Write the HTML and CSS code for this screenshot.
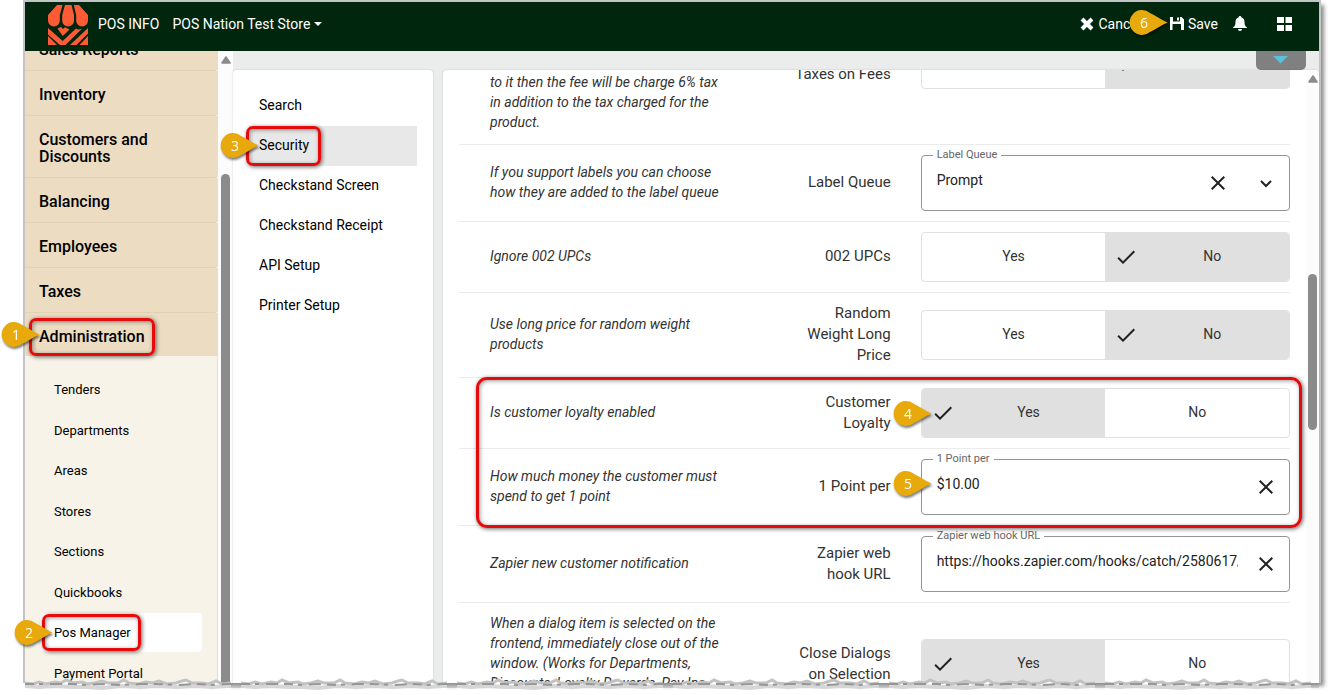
FILE: index.html
```html
<!DOCTYPE html>
<html lang="en">
<head>
<meta charset="utf-8">
<title>POS Manager</title>
<link rel="stylesheet" href="styles.css">
</head>
<body>
<svg class="defs" aria-hidden="true">
  <symbol id="check" viewBox="0 0 24 24"><path d="M9 16.17 4.83 12l-1.42 1.41L9 19 21 7l-1.41-1.41z"/></symbol>
  <symbol id="close" viewBox="0 0 24 24"><path d="M19 6.41 17.59 5 12 10.59 6.41 5 5 6.41 10.59 12 5 17.59 6.41 19 12 13.41 17.59 19 19 17.59 13.41 12z"/></symbol>
  <symbol id="up" viewBox="0 0 10 8"><path d="M5 1 9 7H1z" stroke="currentColor" stroke-width="1.6" stroke-linejoin="round"/></symbol>
  <symbol id="pin" viewBox="0 0 40 26"><path d="M39.5 12.5C33 9.500 28 6 22 3A12.400 12.400 0 1 0 22 22C28 19 33 15.500 39.500 12.500Z"/></symbol>
</svg>
<div class="frame">
  <header class="topbar">
    <svg class="logo" viewBox="0 0 40 40" aria-hidden="true">
      <g fill="#ff5a36">
        <path d="M9 0h5.500L11.800 10v5.500a5.900 5.900 0 0 1-11.800 0V10Z"/>
        <path d="M17 0h6.500L26 10v5.500a5.900 5.900 0 0 1-11.800 0V10Z"/>
        <path d="M25.800 0H31l9 10v5.500a5.900 5.900 0 0 1-11.800 0V10Z"/>
        <path d="M0 31v9h9zM40 31v9h-8.500z"/>
        <path d="M0 23 14.700 36 28 23.500c2 1.500 4 1.200 6 .200L17.500 40h-5.600L0 29.500z"/>
        <path d="M40 23v5.500L28.500 40H22z"/>
        <path d="M9.500 23.500 13 22l2 2 2-1.800 4.500 2.300-6.700 6.500z"/>
      </g>
    </svg>
    <a class="brand" href="#">POS INFO</a>
    <button class="store" type="button">POS Nation Test Store<span class="caret"></span></button>
    <div class="actions">
      <button type="button" class="cancel"><svg width="14" height="14" viewBox="0 0 14 14" aria-hidden="true"><path d="m2 2 10 10M12 2 2 12" stroke="#fff" stroke-width="4"/></svg>Cancel</button>
      <button type="button" class="save"><svg width="15" height="15" viewBox="0 0 15 15" aria-hidden="true"><path fill="#fff" fill-rule="evenodd" d="M1 1h11.500L15 3.500V14H1zM4 1v4.500h7V1zM3.500 8v6h8.500V8z"/><path fill="#fff" d="M8 1.500h2v3H8z"/></svg>Save</button>
      <button type="button" class="bell" aria-label="Notifications"><svg width="14" height="15" viewBox="0 0 14 15" aria-hidden="true"><path fill="#fff" d="M7 0c.8 0 1.200.5 1.200 1.200C10.500 1.800 11.500 3.500 11.500 6c0 3 .7 4.200 2.500 5.500V12H0v-.5C1.800 10.200 2.500 9 2.500 6c0-2.500 1-4.200 3.300-4.800C5.800.5 6.200 0 7 0ZM5 13h4a2 2 0 0 1-4 0Z"/></svg></button>
      <button type="button" class="apps" aria-label="Apps"><svg width="15" height="14" viewBox="0 0 15 14" aria-hidden="true"><path fill="#fff" d="M0 0h7v6H0zM8.500 0H15v6H8.500zM0 8h7v6H0zM8.500 8H15v6H8.500z"/></svg></button>
    </div>
  </header>
  <div class="body">
    <aside class="sidebar">
      <nav class="nav">
        <a class="nav-item" href="#">Sales Reports</a>
        <a class="nav-item" href="#">Inventory</a>
        <a class="nav-item" href="#">Customers and Discounts</a>
        <a class="nav-item" href="#">Balancing</a>
        <a class="nav-item" href="#">Employees</a>
        <a class="nav-item" href="#">Taxes</a>
        <a class="nav-item open" href="#">Administration</a>
        <div class="subnav">
          <a href="#">Tenders</a>
          <a href="#">Departments</a>
          <a href="#">Areas</a>
          <a href="#">Stores</a>
          <a href="#">Sections</a>
          <a href="#">Quickbooks</a>
          <a class="current" href="#">Pos Manager</a>
          <a href="#">Payment Portal</a>
        </div>
      </nav>
    </aside>
    <div class="track side-track"><svg class="arrow"><use href="#up"/></svg><div class="thumb"></div></div>
    <main class="main">
      <div class="strip"><button type="button" class="drop-tab" aria-label="Expand"><svg width="16" height="8" viewBox="0 0 16 8" aria-hidden="true"><path fill="#5bc0de" d="M0 0h15L7.500 7.500z"/></svg></button></div>
      <div class="cards">
        <nav class="card sections">
          <a href="#">Search</a>
          <a class="current" href="#">Security</a>
          <a href="#">Checkstand Screen</a>
          <a href="#">Checkstand Receipt</a>
          <a href="#">API Setup</a>
          <a href="#">Printer Setup</a>
        </nav>
        <div class="card settings">
          <form class="rows">
            <div class="row row-tall">
              <p class="desc">product with a deposit fee assigned<br>to it then the fee will be charge 6% tax in addition to the tax charged for the product.</p>
              <span class="name">Calculate Taxes on Fees</span>
              <div class="toggle" role="radiogroup" aria-label="Taxes on Fees">
                <label><input type="radio" name="fees"><svg><use href="#check"/></svg><span>Yes</span></label>
                <label><input type="radio" name="fees" checked><svg><use href="#check"/></svg><span>No</span></label>
              </div>
            </div>
            <div class="row">
              <p class="desc">If you support labels you can choose how they are added to the label queue</p>
              <span class="name">Label Queue</span>
              <div class="field">
                <label for="queue">Label Queue</label>
                <select id="queue"><option>Prompt</option></select>
                <button type="button" aria-label="Clear"><svg><use href="#close"/></svg></button>
                <span class="chevron"><svg viewBox="0 0 24 24" aria-hidden="true"><path d="m7 10 5 5 5-5" fill="none" stroke="#222" stroke-width="2"/></svg></span>
              </div>
            </div>
            <div class="row">
              <p class="desc">Ignore 002 UPCs</p>
              <span class="name">002 UPCs</span>
              <div class="toggle" role="radiogroup" aria-label="002 UPCs">
                <label><input type="radio" name="upc"><svg><use href="#check"/></svg><span>Yes</span></label>
                <label><input type="radio" name="upc" checked><svg><use href="#check"/></svg><span>No</span></label>
              </div>
            </div>
            <div class="row">
              <p class="desc">Use long price for random weight products</p>
              <span class="name">Random Weight Long Price</span>
              <div class="toggle" role="radiogroup" aria-label="Random Weight Long Price">
                <label><input type="radio" name="rw"><svg><use href="#check"/></svg><span>Yes</span></label>
                <label><input type="radio" name="rw" checked><svg><use href="#check"/></svg><span>No</span></label>
              </div>
            </div>
            <div class="row">
              <p class="desc">Is customer loyalty enabled</p>
              <span class="name">Customer Loyalty</span>
              <div class="toggle" role="radiogroup" aria-label="Customer Loyalty">
                <label><input type="radio" name="loyalty" checked><svg><use href="#check"/></svg><span>Yes</span></label>
                <label><input type="radio" name="loyalty"><svg><use href="#check"/></svg><span>No</span></label>
              </div>
            </div>
            <div class="row">
              <p class="desc">How much money the customer must spend to get 1 point</p>
              <span class="name">1 Point per</span>
              <div class="field">
                <label for="point">1 Point per</label>
                <input id="point" type="text" value="$10.00">
                <button type="button" aria-label="Clear"><svg><use href="#close"/></svg></button>
              </div>
            </div>
            <div class="row">
              <p class="desc">Zapier new customer notification</p>
              <span class="name">Zapier web hook URL</span>
              <div class="field">
                <label for="hook">Zapier web hook URL</label>
                <input id="hook" type="text" value="https://hooks.zapier.com/hooks/catch/2580617/">
                <button type="button" aria-label="Clear"><svg><use href="#close"/></svg></button>
              </div>
            </div>
            <div class="row">
              <p class="desc">When a dialog item is selected on the frontend, immediately close out of the window. (Works for Departments, Discounts, Loyalty Rewards, Pay Ins, Pay Outs)</p>
              <span class="name">Close Dialogs on Selection</span>
              <div class="toggle" role="radiogroup" aria-label="Close Dialogs on Selection">
                <label><input type="radio" name="dialogs" checked><svg><use href="#check"/></svg><span>Yes</span></label>
                <label><input type="radio" name="dialogs"><svg><use href="#check"/></svg><span>No</span></label>
              </div>
            </div>
          </form>
          <div class="track main-track"><svg class="arrow"><use href="#up"/></svg><div class="thumb"></div></div>
        </div>
      </div>
    </main>
  </div>
  <svg class="torn" aria-hidden="true">
    <defs>
      <pattern id="tear" width="216" height="14" patternUnits="userSpaceOnUse">
        <path fill="#fff" d="M0 5l8 1 6-2 7 2 9-2 6 1 5-3 7 3 9-1 5 2 8-1 7-2 6 2 10 0 6-3 5 3 9 1 8-2 7 1 6-2 8 3 9-1 6-2 4-1 6 3 10 0 7 1 7-3 6 3 9 0V14H0z"/>
        <path fill="none" stroke="#999" stroke-opacity=".4" stroke-width="4" d="M0 8l14 1 16-1 18 1 14 0 15 1 19-2 20 1 15-1 21 1 19-1 16 1 15-1 14 0"/>
        <path fill="none" stroke="#c2c2c2" stroke-width="3" d="M0 5l8 1 6-2 7 2 9-2 6 1 5-3 7 3 9-1 5 2 8-1 7-2 6 2 10 0 6-3 5 3 9 1 8-2 7 1 6-2 8 3 9-1 6-2 4-1 6 3 10 0 7 1 7-3 6 3 9-1"/>
        <path fill="none" stroke="#969696" stroke-width="2" stroke-dasharray="9 5 4 7 12 6" d="M0 6l14 0 16 0 18 0 14 1 15-1 19 1 20-1 15 0 21 1 19-1 16 1 15-1 14 0"/>
      </pattern>
    </defs>
    <rect width="100%" height="14" fill="url(#tear)"/>
  </svg>
  <div class="mark m1"></div>
  <div class="mark m2"></div>
  <div class="mark m3"></div>
  <div class="mark m4"></div>
  <div class="pin p1"><svg><use href="#pin"/></svg><b>1</b></div>
  <div class="pin p2"><svg><use href="#pin"/></svg><b>2</b></div>
  <div class="pin p3"><svg><use href="#pin"/></svg><b>3</b></div>
  <div class="pin p4"><svg><use href="#pin"/></svg><b>4</b></div>
  <div class="pin p5"><svg><use href="#pin"/></svg><b>5</b></div>
  <div class="pin p6"><svg><use href="#pin"/></svg><b>6</b></div>
</div>
</body>
</html>
```
FILE: styles.css
```css
* { box-sizing: border-box; }
body {
  margin: 0;
  height: 100vh;
  padding: 0 10px 12px 23px;
  display: flex;
  background: #fff;
  font-family: Roboto, "Liberation Sans", sans-serif;
  font-size: 14px;
  color: #000;
  overflow: hidden;
}
.defs { position: absolute; width: 0; height: 0; }
a { color: inherit; text-decoration: none; }
button { border: 0; padding: 0; background: none; font: inherit; color: inherit; }

.frame {
  position: relative;
  flex: 1;
  min-width: 0;
  display: flex;
  flex-direction: column;
  border: 2px solid #c4c3c6;
  border-bottom: 0;
  box-shadow: 4px 4px 4px -1px rgba(0, 0, 0, .45);
}
.topbar {
  flex: none;
  height: 49px;
  display: flex;
  align-items: center;
  padding: 0 27px 3px 23px;
  background: #00260e;
  color: #fff;
}
.logo { width: 40px; height: 40px; margin-right: 10px; }
.brand { margin-right: 13px; padding-bottom: 2px; }
.store { display: flex; align-items: center; gap: 4px; padding-bottom: 2px; }
.caret { border: 4px solid transparent; border-top-color: #fff; border-bottom: 0; }
.actions { margin-left: auto; padding-bottom: 3px; display: flex; align-items: center; }
.actions button { display: flex; align-items: center; gap: 4px; }
.cancel { margin-right: 28px; }
.save { margin-right: 15px; }
.bell { margin-right: 30px; }

.body { flex: 1; min-height: 0; display: flex; }
.sidebar { flex: none; width: 193px; overflow: hidden; background: #f7f3e8; }
.nav { margin-top: -25px; }
.nav-item {
  display: block;
  padding: 15px 56px 12px 14px;
  border-bottom: 1px solid #e0d1b7;
  border-bottom-right-radius: 4px;
  background: #ebdcc2;
  font-size: 16px;
  line-height: 17px;
  font-weight: 500;
}
.nav-item.open { border: 0; border-radius: 0; padding-bottom: 11px; }
.subnav { padding: 14px 15px 0; border-right: 1px solid #e6dcc8; }
.subnav a {
  display: block;
  margin-bottom: 1px;
  padding-left: 14px;
  border-radius: 4px;
  font-size: 13px;
  line-height: 39px;
}
.subnav a:nth-child(odd) { margin-bottom: 2px; }
.subnav .current { background: #fff; }

.track { flex: none; display: flex; flex-direction: column; align-items: center; background: #fcfcfc; }
.arrow { flex: none; width: 10px; height: 8px; margin-top: 5px; color: #8b8b8b; fill: #8b8b8b; }
.thumb { width: 9px; border-radius: 5px; background: #8b8b8b; }
.side-track { width: 15px; }
.side-track .thumb { flex: 1; margin-top: 110px; border-radius: 5px 5px 0 0; }
.main-track { width: 13px; }
.main-track .thumb { height: 25.5%; margin-top: 191px; }

.main { flex: 1; min-width: 0; display: flex; flex-direction: column; background: #ebedec; }
.strip { flex: none; height: 19px; padding-right: 13px; display: flex; justify-content: flex-end; }
.drop-tab { width: 50px; padding-bottom: 2px; display: flex; align-items: center; justify-content: center; background: #808080; border-radius: 0 0 5px 5px; }
.cards { flex: 1; min-height: 0; display: flex; gap: 10px; }
.card { background: #fff; border-radius: 4px 4px 0 0; box-shadow: 0 0 2px rgba(0, 0, 0, .2); overflow: hidden; }
.sections { flex: none; width: 200px; padding: 16px; }
.sections a { display: block; padding: 0 0 2px 10px; line-height: 38px; }
.sections .current { background: #e8e8e8; }
.settings { flex: 1; min-width: 0; display: flex; }
.rows { flex: 1; min-width: 0; margin-top: -86px; padding: 0 16px; }

.row {
  display: grid;
  grid-template-columns: 3fr 2fr 4fr;
  align-items: center;
  padding: 10px 0;
  border-bottom: 1px solid #ebebeb;
  color: #333;
}
.row-tall { min-height: 161px; }
.row-tall .desc { align-self: end; }
.desc { margin: 0; padding: 0 8px 2px 31px; font-style: italic; line-height: 20px; }
.name { padding: 0 30px 1px 56px; text-align: right; font-size: 15px; line-height: 21px; }

.toggle {
  display: grid;
  grid-template-columns: 1fr 1fr;
  height: 50px;
  border: 1px solid #e0e0e0;
  border-radius: 4px;
  overflow: hidden;
}
.toggle label { display: flex; align-items: center; }
.toggle input { position: absolute; opacity: 0; width: 1px; height: 1px; }
.toggle svg { display: none; width: 24px; height: 24px; margin-left: 9px; fill: #222; }
.toggle span { flex: 1; text-align: center; padding-bottom: 2px; }
.toggle label:has(:checked) { background: #e0e0e0; }
.toggle :checked + svg { display: block; }
.toggle :checked ~ span { padding-right: 3px; }

.field {
  position: relative;
  display: flex;
  min-width: 0;
  height: 56px;
  border: 1px solid #949494;
  border-radius: 4px;
}
.field label {
  position: absolute;
  left: 11px;
  top: -8px;
  padding: 0 4px;
  background: #fff;
  font-size: 11px;
  line-height: 14px;
  color: #666;
}
.field input, .field select {
  flex: 1;
  min-width: 0;
  appearance: none;
  margin: 0 4px 0 15px;
  padding: 0 0 7px;
  border: 0;
  outline: 0;
  background: none;
  font: inherit;
  color: #222;
}
.field button, .chevron { flex: none; width: 48px; display: flex; align-items: center; justify-content: center; }
.field svg { width: 24px; height: 24px; fill: #222; }
.field button:last-child { margin-right: -1px; }
.chevron { margin-right: -1px; }

.torn { position: absolute; left: 0; bottom: -9px; width: 100%; height: 14px; }
.mark { position: absolute; border: 3px solid #e60a0a; border-radius: 7px; box-shadow: 1px 1px 4px rgba(0, 0, 0, .6), inset 1px 1px 4px rgba(0, 0, 0, .4); }
.m1 { left: 4px; top: 316px; width: 126px; height: 38px; }
.m2 { left: 17px; top: 612px; width: 99px; height: 37px; }
.m3 { left: 221px; top: 124px; width: 75px; height: 40px; }
.m4 { left: 451px; right: 17px; top: 375px; height: 151px; border-radius: 11px; }
.pin { position: absolute; width: 40px; height: 26px; filter: drop-shadow(1px 2px 1px rgba(0, 0, 0, .5)); }
.pin svg { position: absolute; width: 40px; height: 26px; fill: #e8a90c; }
.pin b { position: relative; display: block; width: 32px; line-height: 25px; text-align: center; font-family: "Open Sans", sans-serif; font-weight: 400; color: #fff; }
.p1 { left: -25px; top: 320px; }
.p2 { left: -12px; top: 618px; }
.p3 { left: 194px; top: 131px; }
.p4 { right: 387px; top: 399px; }
.p5 { right: 387px; top: 469px; }
.p6 { right: 151px; top: 8px; }
```
